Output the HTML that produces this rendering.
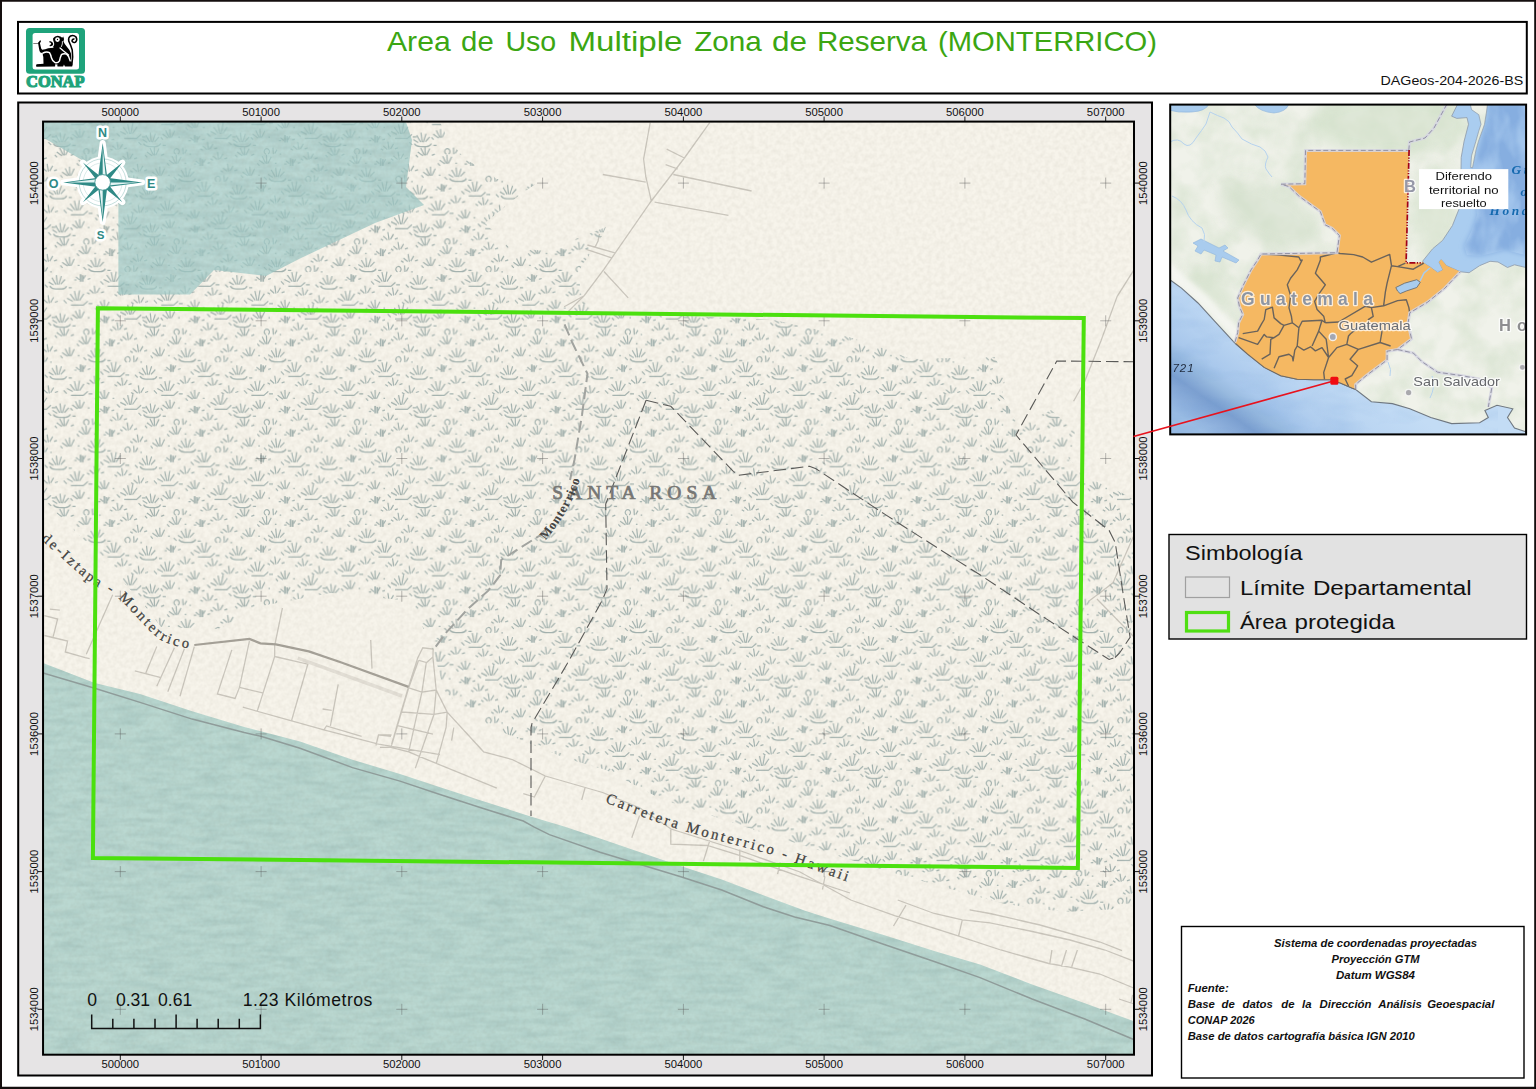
<!DOCTYPE html>
<html lang="es"><head><meta charset="utf-8"><title>Area de Uso Multiple Zona de Reserva (MONTERRICO)</title>
<style>
html,body{margin:0;padding:0;background:#fff;}
body{width:1536px;height:1089px;overflow:hidden;font-family:"Liberation Sans",sans-serif;}
svg{display:block;position:absolute;left:0;top:0;}
text{font-family:"Liberation Sans",sans-serif;}
.serif{font-family:"Liberation Serif",serif;}
</style></head><body>
<svg width="1536" height="1089" viewBox="0 0 1536 1089">
<defs>
<clipPath id="mapclip"><rect x="43.05" y="121.6" width="1090.95" height="933.1"/></clipPath>
<pattern id="swp" x="150" y="332.5" width="90.25" height="90.25" patternUnits="userSpaceOnUse"><g fill="none" stroke="#a4b3b0" stroke-linecap="butt" opacity="1.0"><path d="M2.2 3.7L-3.1 -0.1M3.5 3.3L-0.0 -3.9M4.5 3.5L4.2 -5.5M5.7 3.3L9.0 -3.5M-4.9 3.0l2.2 2.4M11.1 3.3l3 -1.2M2.2 94.0L-3.1 90.2M3.5 93.5L-0.0 86.3M4.5 93.8L4.2 84.8M5.7 93.5L9.0 86.8M-4.9 93.3l2.2 2.4M11.1 93.6l3 -1.2M92.4 3.7L87.2 -0.1M93.7 3.3L90.2 -3.9M94.8 3.5L94.5 -5.5M95.9 3.3L99.2 -3.5M85.3 3.0l2.2 2.4M101.3 3.3l3 -1.2M92.4 94.0L87.2 90.2M93.7 93.5L90.2 86.3M94.8 93.8L94.5 84.8M95.9 93.5L99.2 86.8M85.3 93.3l2.2 2.4M101.3 93.6l3 -1.2M25.7 2.2a2.6 2.8 0 1 1 2.2 -0.2M33.1 2.2L32.7 -4.3M34.5 1.5L36.7 -2.4M39.4 2.1h1.5M25.7 92.4a2.6 2.8 0 1 1 2.2 -0.2M33.1 92.4L32.7 85.9M34.5 91.8L36.7 87.9M39.4 92.3h1.5M24.2 12.0L18.9 8.2M25.5 11.5L22.0 4.3M26.6 11.8L26.2 2.8M27.7 11.5L31.0 4.8M17.1 11.3l2.2 2.4M34.6 11.2h1.6M24.2 102.3L18.9 98.4M25.5 101.8L22.0 94.6M26.6 102.0L26.2 93.0M27.7 101.8L31.0 95.0M17.1 101.5l2.2 2.4M34.6 101.4h1.6M49.1 11.8L45.7 9.0M52.9 11.2L55.2 7.3M43.9 12.0h2.4M57.4 11.3l2.6 -0.8M49.1 102.1L45.7 99.2M52.9 101.4L55.2 97.5M43.9 102.2h2.4M57.4 101.5l2.6 -0.8M67.0 7.5L62.9 3.8M68.7 7.7L67.5 -0.2M70.1 7.0L73.1 1.8M60.4 6.7l2.5 1.6M74.4 6.8l3 -1M67.0 97.8L62.9 94.1M68.7 97.9L67.5 90.0M70.1 97.3L73.1 92.1M60.4 96.9l2.5 1.6M74.4 97.0l3 -1M7.7 23.9L2.4 20.1M9.0 23.5L5.5 16.3M10.0 23.7L9.7 14.7M11.2 23.5L14.5 16.7M0.6 23.2l2.2 2.4M18.1 23.1h1.6M97.9 23.9L92.7 20.1M99.3 23.5L95.7 16.3M100.3 23.7L100.0 14.7M101.4 23.5L104.7 16.7M90.9 23.2l2.2 2.4M108.4 23.1h1.6M28.7 26.4Q30.7 29.4 34.7 29.4H40.7Q44.2 29.4 45.7 26.4M32.5 25.2L27.8 22.3M35.0 24.9L31.0 17.9M36.4 24.9L35.4 15.5M37.7 25.0L40.4 16.5M39.7 24.5L44.1 19.7M23.7 24.9l2.8 2.8M47.7 28.2h3.2M-13.1 19.4L-17.2 15.8M-11.5 19.6L-12.6 11.7M-10.0 19.0L-7.0 13.8M-19.8 18.6l2.5 1.6M-5.8 18.7l3 -1M77.1 19.4L73.0 15.8M78.8 19.6L77.6 11.7M80.2 19.0L83.2 13.8M70.5 18.6l2.5 1.6M84.5 18.7l3 -1M67.0 29.7a2.6 2.8 0 1 1 2.2 -0.2M74.4 29.7L74.0 23.2M75.8 29.1L78.0 25.2M80.7 29.6h1.5M19.7 37.6L16.3 34.7M23.5 36.9L25.8 33.0M14.5 37.7h2.4M28.0 37.0l2.6 -0.8M48.0 44.1H60.4l4.5 -4M49.8 40.2L44.0 37.2M51.8 39.3L47.1 32.9M53.6 39.6L51.5 29.9M54.7 39.6L56.5 29.3M56.4 39.3L60.9 32.6M40.7 39.1l3 3.2M65.7 42.6h3.8M-10.1 43.8Q-8.1 46.8 -4.1 46.8H1.9Q5.4 46.8 6.9 43.8M-6.3 42.7L-11.0 39.8M-3.8 42.3L-7.8 35.4M-2.4 42.3L-3.4 32.9M-1.2 42.5L1.6 33.9M0.9 42.0L5.3 37.2M-15.1 42.3l2.8 2.8M8.9 45.6h3.2M80.2 43.8Q82.2 46.8 86.2 46.8H92.2Q95.7 46.8 97.2 43.8M83.9 42.7L79.2 39.8M86.4 42.3L82.4 35.4M87.8 42.3L86.8 32.9M89.1 42.5L91.9 33.9M91.2 42.0L95.5 37.2M75.2 42.3l2.8 2.8M99.2 45.6h3.2M34.0 51.1L29.9 47.4M35.6 51.3L34.5 43.4M37.1 50.6L40.1 45.4M27.3 50.3l2.5 1.6M41.3 50.4l3 -1M61.5 53.0L57.4 49.3M63.2 53.2L62.0 45.2M64.6 52.5L67.6 47.3M54.9 52.1l2.5 1.6M68.9 52.2l3 -1M11.2 62.9H23.6l4.5 -4M13.0 59.1L7.3 56.0M15.1 58.2L10.4 51.7M16.8 58.5L14.7 48.7M18.0 58.4L19.8 48.1M19.7 58.1L24.2 51.5M3.9 57.9l3 3.2M28.9 61.4h3.8M-12.2 60.8L-16.3 57.1M-10.6 61.0L-11.7 53.0M-9.1 60.3L-6.1 55.1M-18.9 59.9l2.5 1.6M-4.9 60.0l3 -1M78.0 60.8L73.9 57.1M79.7 61.0L78.6 53.0M81.1 60.3L84.1 55.1M71.4 59.9l2.5 1.6M85.4 60.0l3 -1M42.6 66.6L37.3 62.8M43.9 66.2L40.4 59.0M44.9 66.4L44.6 57.4M46.1 66.2L49.4 59.4M35.5 65.9l2.2 2.4M53.0 65.8h1.6M64.5 76.7H76.9l4.5 -4M66.3 72.8L60.6 69.8M68.4 71.9L63.7 65.5M70.1 72.2L68.0 62.5M71.2 72.2L73.1 61.9M72.9 71.9L77.4 65.2M57.2 71.7l3 3.2M82.2 75.2h3.8M17.8 76.3L12.5 72.5M19.1 75.8L15.6 68.6M20.1 76.1L19.8 67.1M21.3 75.8L24.6 69.1M10.7 75.6l2.2 2.4M28.2 75.5h1.6M43.6 78.9L40.2 76.0M47.4 78.2L49.7 74.3M38.4 79.0h2.4M51.9 78.3l2.6 -0.8M-6.4 81.9Q-4.4 84.9 -0.4 84.9H5.6Q9.1 84.9 10.6 81.9M-2.7 80.8L-7.3 77.9M-0.2 80.4L-4.2 73.5M1.3 80.5L0.3 71.0M2.5 80.6L5.3 72.0M4.6 80.1L8.9 75.3M-11.4 80.4l2.8 2.8M12.6 83.7h3.2M83.8 81.9Q85.8 84.9 89.8 84.9H95.8Q99.3 84.9 100.8 81.9M87.6 80.8L82.9 77.9M90.1 80.4L86.1 73.5M91.5 80.5L90.5 71.0M92.8 80.6L95.5 72.0M94.8 80.1L99.2 75.3M78.8 80.4l2.8 2.8M102.8 83.7h3.2M56.9 -2.4L52.8 -6.1M58.6 -2.2L57.4 -10.1M60.0 -2.9L63.0 -8.1M50.3 -3.2l2.5 1.6M64.3 -3.1l3 -1M56.9 87.9L52.8 84.2M58.6 88.0L57.4 80.1M60.0 87.4L63.0 82.2M50.3 87.0l2.5 1.6M64.3 87.1l3 -1" stroke-width="1.2"/><path d="M50.2 13.8V6.3M52.4 13.8V7.3M50.2 104.0V96.5M52.4 104.0V97.5M20.8 39.5V32.0M23.0 39.5V33.0M44.7 80.8V73.3M46.9 80.8V74.3" stroke-width="1.7"/></g></pattern>
<filter id="paper" x="0" y="0" width="100%" height="100%" color-interpolation-filters="sRGB"><feTurbulence type="fractalNoise" baseFrequency="0.22" numOctaves="2" seed="5"/><feColorMatrix type="matrix" values="0 0 0 0 0.5  0 0 0 0 0.47  0 0 0 0 0.4  0 0 0 0.16 -0.05"/></filter>
<filter id="waves" x="0" y="0" width="100%" height="100%" color-interpolation-filters="sRGB"><feTurbulence type="fractalNoise" baseFrequency="0.035 0.16" numOctaves="2" seed="9"/><feColorMatrix type="matrix" values="0 0 0 0 0.35  0 0 0 0 0.5  0 0 0 0 0.5  0 0 0 0.3 -0.1"/></filter>
<clipPath id="seaclip"><polygon points="43.0,663.0 94.7,683.0 140.0,694.1 192.1,711.3 244.2,726.9 300.0,741.5 352.5,759.8 400.0,773.9 440.0,787.2 481.7,800.7 530.6,816.4 565.0,826.8 600.0,838.5 671.6,863.0 721.7,879.6 763.3,895.2 805.0,910.8 830.0,918.8 882.1,934.4 934.2,951.0 980.0,964.6 1032.1,984.4 1084.2,1003.1 1136.0,1022.0 1136.0,1057.0 43.0,1057.0"/><polygon points="43.0,122.0 406.0,122.0 412.0,140.0 406.0,187.0 424.0,205.0 375.0,223.0 299.0,259.0 266.0,276.0 214.0,270.0 190.0,294.6 118.4,294.6 118.4,186.0 82.0,160.0 43.0,137.5"/></clipPath>
</defs>
<rect x="18.2" y="102.5" width="1133.8" height="973" fill="#e6e4e5" stroke="#000" stroke-width="2"/>
<g clip-path="url(#mapclip)">
<rect x="43.05" y="121.6" width="1090.95" height="933.1" fill="#f7f4eb"/>
<path d="M49.9 609.1 L59.8 610.2M44.4 615.7 L57.6 619.0 L53.2 636.7M44.4 635.5 L67.6 641.0 L65.3 652.0 L85.2 657.6 L89.6 658.7M112.7 594.8 L86.3 654.3M156.8 646.6 L145.8 673.0M134.8 670.8 L160.1 677.4M174.4 647.7 L156.8 686.2M184.4 648.8 L167.8 691.8M194.3 646.6 L180.0 696.2M231.8 649.9 L217.4 694.0 L235.1 698.4 L239.5 687.4 L249.4 641.1M239.5 687.4 L262.6 692.9M282.4 608.0 L274.7 645.5 L274.7 656.5 L257.1 711.6M242.8 707.2 L323.9 729.8 L378.5 744.2 L440.0 754.6M274.7 656.5 L307.8 664.2 L291.3 721.5M338.2 684.3 L330.4 725.9M322.6 709.0 L331.7 710.3M323.9 729.8 L326.5 725.9 L361.6 736.4M370.7 640.0 L372.0 668.6M408.5 686.9 L391.6 744.2M408.5 686.9 L417.6 658.2 L422.8 647.8 L433.2 649.1 L432.9 657.0 L426.6 662.5 L418.9 660.3M432.9 657.0 L436.2 690.0 L447.2 712.1 L483.6 751.8 L512.2 759.5 L545.3 776.0 L602.6 792.5M418.6 660.3 L408.7 687.8 L391.0 747.4M426.3 662.5 L421.9 692.2 L408.7 751.8M436.2 690.0 L434.0 714.3 L415.3 768.3M447.2 712.1 L446.1 727.5 L436.2 763.9M408.7 687.8 L421.9 692.2 L436.2 690.0M402.0 712.0 L434.0 714.3 L447.2 712.1M396.5 725.3 L432.9 734.1M380.0 735.2 L391.0 736.3M375.9 745.5 L378.5 735.0 L391.6 735.0M380.0 747.4 L391.0 747.4 L408.7 751.8 L424.1 758.4 L496.8 788.1M453.8 727.5 L451.6 740.7M545.3 776.0 L534.3 797.0 L523.3 793.7M585.0 788.0 L581.7 800.0M602.6 792.5 L640.0 808.0 L671.0 829.0 L741.0 851.0 L800.0 872.0 L850.8 900.0 L894.6 915.6 L955.0 934.9 L1000.8 950.0 L1048.8 963.5 L1069.6 967.2 L1099.8 974.0 L1136.0 989.0M670.8 829.8 L670.8 844.2 L707.3 845.5 L741.0 855.9 L800.0 876.7 L850.0 893.0M897.7 900.0 L934.2 913.5 L962.3 919.8 L990.0 922.9 L1030.0 931.0 L1070.0 940.0 L1105.0 950.0 L1136.0 962.0M969.6 909.9 L990.0 913.5 L1040.0 925.0 L1100.0 942.0 L1122.0 950.7M639.6 815.5 L631.8 837.7M709.9 840.3 L703.4 861.1M739.8 849.4 L739.8 861.1M780.2 862.4 L777.6 874.1M825.0 876.5 L822.5 889.5M906.0 905.2 L893.5 926.0M962.3 919.8 L958.6 935.9M1051.9 950.0 L1049.8 963.5M1066.5 950.0 L1061.3 966.7M1077.4 950.0 L1071.7 966.7M1119.0 999.0 L1131.0 1003.0 L1136.0 1004.5M1132.6 994.8 L1131.0 1003.0M650.2 122.7 L643.6 159.1 L645.8 176.7 L651.3 201.0M709.7 122.7 L684.4 158.0 L651.3 201.0 L603.9 269.3 L584.1 295.7 L566.4 313.4M666.7 149.2 L684.4 158.0M665.6 164.6 L677.8 169.0M673.3 174.5 L751.6 191.0M654.6 202.1 L728.4 215.3M602.8 174.5 L645.8 182.2M587.4 245.0 L614.9 252.8M586.3 249.4 L611.6 257.8M603.9 271.5 L628.2 297.9M584.1 295.7 L564.2 306.8M599.5 234.0 L598.0 241.0 L595.1 247.2M1136.0 266.0 L1132.5 272.1 L1117.2 296.3 L1101.0 340.7 L1084.9 381.0 L1073.6 401.2M1136.0 532.0 L1132.5 538.5 L1113.0 582.8 L1097.0 595.0 L1089.0 601.0M1097.0 599.0 L1136.0 639.0" fill="none" stroke="#cbc7be" stroke-width="1.3"/>
<polyline points="297.8,658.2 402.0,696.0" fill="none" stroke="#e3dfd6" stroke-width="3.5"/>
<polyline points="194.3,645.0 249.4,638.9 260.4,643.3 275.8,644.4 308.8,651.4 340.0,662.0 408.5,686.9" fill="none" stroke="#a5a198" stroke-width="2.2"/>
<polygon points="43.0,663.0 94.7,683.0 140.0,694.1 192.1,711.3 244.2,726.9 300.0,741.5 352.5,759.8 400.0,773.9 440.0,787.2 481.7,800.7 530.6,816.4 565.0,826.8 600.0,838.5 671.6,863.0 721.7,879.6 763.3,895.2 805.0,910.8 830.0,918.8 882.1,934.4 934.2,951.0 980.0,964.6 1032.1,984.4 1084.2,1003.1 1136.0,1022.0 1136.0,1057.0 43.0,1057.0" fill="#bad8d1"/>
<polygon points="43.0,122.0 440.0,122.0 446.0,135.0 464.0,158.0 497.0,179.0 537.0,183.0 517.0,197.0 485.0,223.0 509.0,247.0 545.0,251.0 606.0,227.0 602.0,236.0 578.0,272.0 582.0,300.0 600.0,312.0 774.0,320.0 846.0,336.0 888.0,350.0 911.0,359.0 995.0,357.0 1005.0,379.0 1002.0,395.0 1010.0,410.0 1020.0,426.0 1051.0,410.0 1075.0,431.0 1070.0,460.0 1088.0,478.0 1122.0,493.0 1135.0,500.0 1135.0,908.0 1065.0,912.0 1005.0,904.0 904.0,876.0 782.0,839.0 661.0,799.0 606.0,770.0 565.0,758.0 497.0,730.0 481.0,722.0 464.0,710.0 444.0,690.0 434.0,653.0 420.0,621.0 412.0,601.0 331.0,593.0 266.0,605.0 218.0,629.0 161.0,627.0 141.0,601.0 121.0,580.0 80.0,536.0 43.0,500.0" fill="url(#swp)"/>
<polygon points="43.0,122.0 406.0,122.0 412.0,140.0 406.0,187.0 424.0,205.0 375.0,223.0 299.0,259.0 266.0,276.0 214.0,270.0 190.0,294.6 118.4,294.6 118.4,186.0 82.0,160.0 43.0,137.5" fill="#a2cdcb" fill-opacity="0.72"/>
<rect x="43.05" y="121.6" width="1090.95" height="933.1" filter="url(#paper)"/>
<g clip-path="url(#seaclip)"><rect x="43.05" y="121.6" width="1090.95" height="933.1" filter="url(#waves)"/></g>
<polyline points="43.0,673.0 94.7,688.2 140.0,702.4 192.1,719.1 244.2,732.6 260.8,736.3 300.0,748.2 352.5,767.6 400.0,781.1 440.0,794.5 481.7,808.0 523.3,821.0 533.8,826.8 549.4,834.6 600.0,852.3 680.0,876.5 721.7,890.0 763.3,906.7 794.6,917.0 830.0,925.5 882.1,943.8 934.2,961.5 980.0,977.6 1032.1,999.0 1084.2,1018.8 1136.0,1040.4" fill="none" stroke="#8f9c9a" stroke-width="1.5"/>
<polyline points="564.6,324.3 572.0,342.0 587.5,373.8 582.0,415.0 574.5,459.7 570.0,480.0" fill="none" stroke="#a1a39f" stroke-width="2" stroke-dasharray="12 5"/>
<polyline points="545.0,530.0 540.6,535.0 512.0,553.0 501.2,560.0 500.1,575.4 488.0,590.9 468.2,608.5 446.1,632.7 432.9,650.4" fill="none" stroke="#a1a39f" stroke-width="2" stroke-dasharray="12 5"/>
<polyline points="646.1,400.3 605.7,504.0 607.0,588.7 602.6,599.7 567.3,663.6 532.1,723.1 531.0,727.5 531.0,816.0" fill="none" stroke="#5a5a58" stroke-width="1.1" stroke-dasharray="12.5 5"/>
<polyline points="646.1,400.3 670.8,406.3 733.3,471.4 738.5,475.3 809.5,466.2 816.0,468.8 885.0,514.4 950.1,556.0 980.0,574.8 1040.5,615.1 1109.1,659.5 1115.0,657.5" fill="none" stroke="#5a5a58" stroke-width="1.1" stroke-dasharray="12.5 5"/>
<polyline points="1136.0,361.8 1056.8,361.0 1016.0,435.0 1072.8,502.1 1109.1,530.4 1115.2,542.5 1123.3,595.0 1130.1,637.3 1119.2,653.5 1115.0,657.5" fill="none" stroke="#5a5a58" stroke-width="1.1" stroke-dasharray="12.5 5"/>
<text x="552.3" y="498.8" class="serif" font-size="19.5" fill="#767674" stroke="#767674" stroke-width="0.7" textLength="164" lengthAdjust="spacing">SANTA ROSA</text>
<path id="lp3" d="M540.0 547.0C540.9 545.9 543.2 543.2 545.5 540.5C547.8 537.8 550.8 534.2 553.5 530.5C556.2 526.8 559.2 522.4 562.0 518.0C564.8 513.6 567.6 508.7 570.0 504.0C572.4 499.3 574.7 494.7 576.5 490.0C578.3 485.3 579.8 480.3 581.0 476.0C582.2 471.7 583.5 466.0 584.0 464.0" fill="none"/>
<text class="serif" font-size="13" font-weight="bold" fill="#454543" letter-spacing="0.75"><textPath href="#lp3" startOffset="8.5">Monterrico</textPath></text>
<path id="lp1" d="M41.0 539.5C44.1 542.3 53.2 550.3 59.8 556.2C66.4 562.1 74.9 570.0 80.8 574.9C86.7 579.8 90.2 582.5 95.1 585.5C100.0 588.5 105.6 590.4 110.0 593.0C114.4 595.6 117.8 598.2 121.6 601.4C125.4 604.6 128.6 608.2 132.6 612.4C136.6 616.6 141.6 622.5 145.8 626.7C150.0 630.9 153.7 634.8 157.9 637.8C162.1 640.8 166.1 642.7 171.1 644.4C176.1 646.1 182.9 647.2 187.7 648.1C192.5 649.0 197.9 649.3 200.0 649.5" fill="none"/>
<text class="serif" font-size="14.5" fill="#424240" stroke="#424240" stroke-width="0.25" letter-spacing="2.6"><textPath href="#lp1" startOffset="0">de-Iztapa - Monterrico</textPath></text>
<path id="lp2" d="M600.5 800.6C601.4 800.9 598.0 799.5 605.7 802.5C613.5 805.5 633.1 813.5 647.0 818.5C660.9 823.5 675.2 828.2 689.0 832.4C702.8 836.6 716.2 839.8 730.0 843.5C743.8 847.2 760.6 851.3 771.7 854.6C782.8 857.9 786.5 859.8 796.7 863.4C806.9 867.0 822.8 872.8 833.0 876.5C843.2 880.2 850.2 882.7 858.0 885.5C865.8 888.3 876.3 892.2 880.0 893.5" fill="none"/>
<text class="serif" font-size="15" fill="#424240" stroke="#424240" stroke-width="0.25" letter-spacing="2.55"><textPath href="#lp2" startOffset="5">Carretera Monterrico - Hawaii</textPath></text>
<path d="M114.8 183.1h11M120.3 177.6v11M114.8 320.8h11M120.3 315.3v11M114.8 458.5h11M120.3 453.0v11M114.8 596.2h11M120.3 590.7v11M114.8 733.9h11M120.3 728.4v11M114.8 871.6h11M120.3 866.1v11M114.8 1009.3h11M120.3 1003.8v11M255.6 183.1h11M261.1 177.6v11M255.6 320.8h11M261.1 315.3v11M255.6 458.5h11M261.1 453.0v11M255.6 596.2h11M261.1 590.7v11M255.6 733.9h11M261.1 728.4v11M255.6 871.6h11M261.1 866.1v11M255.6 1009.3h11M261.1 1003.8v11M396.3 183.1h11M401.8 177.6v11M396.3 320.8h11M401.8 315.3v11M396.3 458.5h11M401.8 453.0v11M396.3 596.2h11M401.8 590.7v11M396.3 733.9h11M401.8 728.4v11M396.3 871.6h11M401.8 866.1v11M396.3 1009.3h11M401.8 1003.8v11M537.1 183.1h11M542.6 177.6v11M537.1 320.8h11M542.6 315.3v11M537.1 458.5h11M542.6 453.0v11M537.1 596.2h11M542.6 590.7v11M537.1 733.9h11M542.6 728.4v11M537.1 871.6h11M542.6 866.1v11M537.1 1009.3h11M542.6 1003.8v11M677.9 183.1h11M683.4 177.6v11M677.9 320.8h11M683.4 315.3v11M677.9 458.5h11M683.4 453.0v11M677.9 596.2h11M683.4 590.7v11M677.9 733.9h11M683.4 728.4v11M677.9 871.6h11M683.4 866.1v11M677.9 1009.3h11M683.4 1003.8v11M818.6 183.1h11M824.1 177.6v11M818.6 320.8h11M824.1 315.3v11M818.6 458.5h11M824.1 453.0v11M818.6 596.2h11M824.1 590.7v11M818.6 733.9h11M824.1 728.4v11M818.6 871.6h11M824.1 866.1v11M818.6 1009.3h11M824.1 1003.8v11M959.4 183.1h11M964.9 177.6v11M959.4 320.8h11M964.9 315.3v11M959.4 458.5h11M964.9 453.0v11M959.4 596.2h11M964.9 590.7v11M959.4 733.9h11M964.9 728.4v11M959.4 871.6h11M964.9 866.1v11M959.4 1009.3h11M964.9 1003.8v11M1100.2 183.1h11M1105.7 177.6v11M1100.2 320.8h11M1105.7 315.3v11M1100.2 458.5h11M1105.7 453.0v11M1100.2 596.2h11M1105.7 590.7v11M1100.2 733.9h11M1105.7 728.4v11M1100.2 871.6h11M1105.7 866.1v11M1100.2 1009.3h11M1105.7 1003.8v11" stroke="#5a5a58" stroke-width="0.7" fill="none" opacity="0.6"/>
<polygon points="97.9,308.2 1083.8,318.1 1077.9,867.9 92.9,857.9" fill="none" stroke="#4be00e" stroke-width="4" stroke-linejoin="miter"/>
<g stroke="#fff" stroke-width="6" stroke-linejoin="round" fill="#fff">
<circle cx="102.65" cy="182.4" r="23"/>
<polygon points="122.4,162.6 106.9,182.4 122.4,202.2 102.7,186.6 82.9,202.2 98.5,182.4 82.9,162.6 102.7,178.2"/><polygon points="102.7,142.9 107.3,177.7 142.2,182.4 107.3,187.1 102.7,221.9 98.0,187.1 63.2,182.4 98.0,177.7"/>
</g>
<circle cx="102.65" cy="182.4" r="23.5" fill="none" stroke="#9cc7c4" stroke-width="0.6"/>
<circle cx="102.65" cy="182.4" r="19.5" fill="none" stroke="#b7d6d3" stroke-width="0.5"/>
<polygon points="122.4,162.6 106.9,182.4 122.4,202.2 102.7,186.6 82.9,202.2 98.5,182.4 82.9,162.6 102.7,178.2" fill="#2f8a86"/>
<polygon points="102.7,182.4 122.4,162.6 106.9,182.4" fill="#d8eeee" opacity="0.0"/>
<polygon points="102.7,182.4 122.4,202.2 102.7,186.6" fill="#d8eeee" opacity="0.0"/>
<polygon points="102.7,182.4 82.9,202.2 98.5,182.4" fill="#d8eeee" opacity="0.0"/>
<polygon points="102.7,182.4 82.9,162.6 102.7,178.2" fill="#d8eeee" opacity="0.0"/>
<polygon points="102.7,142.9 107.3,177.7 142.2,182.4 107.3,187.1 102.7,221.9 98.0,187.1 63.2,182.4 98.0,177.7" fill="#2f8a86"/>
<polygon points="102.7,179.4 102.7,147.4 106.0,179.0" fill="#e4f4f3"/>
<polygon points="105.7,182.4 137.7,182.4 106.0,185.8" fill="#e4f4f3"/>
<polygon points="102.7,185.4 102.7,217.4 99.3,185.8" fill="#e4f4f3"/>
<polygon points="99.7,182.4 67.7,182.4 99.3,179.0" fill="#e4f4f3"/>
<circle cx="102.65" cy="182.4" r="7.8" fill="#fff" stroke="#2f8a86" stroke-width="0.8"/>
<text x="102.6" y="137.4" font-size="12.5" font-weight="bold" fill="#2f8a86" text-anchor="middle" stroke="#fff" stroke-width="5" paint-order="stroke" stroke-linejoin="round">N</text>
<text x="151.2" y="188" font-size="12.5" font-weight="bold" fill="#2f8a86" text-anchor="middle" stroke="#fff" stroke-width="5" paint-order="stroke" stroke-linejoin="round">E</text>
<text x="53.7" y="188" font-size="12.5" font-weight="bold" fill="#2f8a86" text-anchor="middle" stroke="#fff" stroke-width="5" paint-order="stroke" stroke-linejoin="round">O</text>
<text x="100.6" y="239" font-size="11.5" font-weight="bold" fill="#2f8a86" text-anchor="middle" stroke="#fff" stroke-width="5" paint-order="stroke" stroke-linejoin="round">S</text>
<path d="M91.7 1014.6V1028.4H260.4V1014.6M112.8 1018.8V1028.4M133.9 1018.8V1028.4M155.0 1018.8V1028.4M176.1 1014.6V1028.4M197.1 1018.8V1028.4M218.2 1018.8V1028.4M239.3 1018.8V1028.4" fill="none" stroke="#111" stroke-width="1.5"/>
<text x="87.2" y="1005.5" font-size="17.6" fill="#111">0</text>
<text x="115.9" y="1005.5" font-size="17.6" fill="#111">0.31</text>
<text x="158" y="1005.5" font-size="17.6" fill="#111">0.61</text>
<text x="242.7" y="1005.5" font-size="17.6" fill="#111" textLength="129.7" lengthAdjust="spacing">1.23 Kilómetros</text>
</g>
<rect x="43.05" y="121.6" width="1090.95" height="933.1" fill="none" stroke="#000" stroke-width="2"/>
<path d="M120.3 116.5V122M120.3 1054.5V1060M261.1 116.5V122M261.1 1054.5V1060M401.8 116.5V122M401.8 1054.5V1060M542.6 116.5V122M542.6 1054.5V1060M683.4 116.5V122M683.4 1054.5V1060M824.1 116.5V122M824.1 1054.5V1060M964.9 116.5V122M964.9 1054.5V1060M1105.7 116.5V122M1105.7 1054.5V1060M37.5 183.1H43M1134 183.1H1139.5M37.5 320.8H43M1134 320.8H1139.5M37.5 458.5H43M1134 458.5H1139.5M37.5 596.2H43M1134 596.2H1139.5M37.5 733.9H43M1134 733.9H1139.5M37.5 871.6H43M1134 871.6H1139.5M37.5 1009.3H43M1134 1009.3H1139.5" stroke="#000" stroke-width="0.9" fill="none"/>
<text x="120.3" y="116.4" font-size="11.3" fill="#111" text-anchor="middle">500000</text>
<text x="120.3" y="1068.2" font-size="11.3" fill="#111" text-anchor="middle">500000</text>
<text x="261.1" y="116.4" font-size="11.3" fill="#111" text-anchor="middle">501000</text>
<text x="261.1" y="1068.2" font-size="11.3" fill="#111" text-anchor="middle">501000</text>
<text x="401.8" y="116.4" font-size="11.3" fill="#111" text-anchor="middle">502000</text>
<text x="401.8" y="1068.2" font-size="11.3" fill="#111" text-anchor="middle">502000</text>
<text x="542.6" y="116.4" font-size="11.3" fill="#111" text-anchor="middle">503000</text>
<text x="542.6" y="1068.2" font-size="11.3" fill="#111" text-anchor="middle">503000</text>
<text x="683.4" y="116.4" font-size="11.3" fill="#111" text-anchor="middle">504000</text>
<text x="683.4" y="1068.2" font-size="11.3" fill="#111" text-anchor="middle">504000</text>
<text x="824.1" y="116.4" font-size="11.3" fill="#111" text-anchor="middle">505000</text>
<text x="824.1" y="1068.2" font-size="11.3" fill="#111" text-anchor="middle">505000</text>
<text x="964.9" y="116.4" font-size="11.3" fill="#111" text-anchor="middle">506000</text>
<text x="964.9" y="1068.2" font-size="11.3" fill="#111" text-anchor="middle">506000</text>
<text x="1105.7" y="116.4" font-size="11.3" fill="#111" text-anchor="middle">507000</text>
<text x="1105.7" y="1068.2" font-size="11.3" fill="#111" text-anchor="middle">507000</text>
<text transform="translate(37.6 183.1) rotate(-90)" font-size="11.3" fill="#111" text-anchor="middle">1540000</text>
<text transform="translate(1147.2 183.1) rotate(-90)" font-size="11.3" fill="#111" text-anchor="middle">1540000</text>
<text transform="translate(37.6 320.8) rotate(-90)" font-size="11.3" fill="#111" text-anchor="middle">1539000</text>
<text transform="translate(1147.2 320.8) rotate(-90)" font-size="11.3" fill="#111" text-anchor="middle">1539000</text>
<text transform="translate(37.6 458.5) rotate(-90)" font-size="11.3" fill="#111" text-anchor="middle">1538000</text>
<text transform="translate(1147.2 458.5) rotate(-90)" font-size="11.3" fill="#111" text-anchor="middle">1538000</text>
<text transform="translate(37.6 596.2) rotate(-90)" font-size="11.3" fill="#111" text-anchor="middle">1537000</text>
<text transform="translate(1147.2 596.2) rotate(-90)" font-size="11.3" fill="#111" text-anchor="middle">1537000</text>
<text transform="translate(37.6 733.9) rotate(-90)" font-size="11.3" fill="#111" text-anchor="middle">1536000</text>
<text transform="translate(1147.2 733.9) rotate(-90)" font-size="11.3" fill="#111" text-anchor="middle">1536000</text>
<text transform="translate(37.6 871.6) rotate(-90)" font-size="11.3" fill="#111" text-anchor="middle">1535000</text>
<text transform="translate(1147.2 871.6) rotate(-90)" font-size="11.3" fill="#111" text-anchor="middle">1535000</text>
<text transform="translate(37.6 1009.3) rotate(-90)" font-size="11.3" fill="#111" text-anchor="middle">1534000</text>
<text transform="translate(1147.2 1009.3) rotate(-90)" font-size="11.3" fill="#111" text-anchor="middle">1534000</text>
<defs>
<clipPath id="insclip"><rect x="1170.2" y="104.6" width="355.89999999999986" height="329.79999999999995"/></clipPath>
<clipPath id="landclip"><polygon points="1168.0,278.5 1171.3,280.7 1181.5,288.1 1198.0,303.0 1214.6,321.2 1234.4,342.6 1247.6,354.2 1264.2,367.4 1280.7,375.7 1297.2,379.3 1313.8,379.8 1330.3,379.8 1340.2,383.1 1351.8,388.1 1355.7,389.6 1371.4,401.8 1392.4,403.6 1409.8,408.8 1430.8,417.5 1451.7,423.6 1479.6,422.8 1488.3,417.5 1484.9,410.6 1497.0,405.3 1512.8,408.8 1507.5,417.5 1514.5,428.0 1525.0,431.5 1529.0,432.0 1529.0,268.0 1525.9,267.5 1514.5,264.8 1507.5,267.5 1498.0,262.0 1490.0,261.3 1479.6,265.7 1469.1,272.7 1460.4,271.8 1446.5,265.7 1441.2,259.6 1439.0,262.0 1443.0,270.0 1437.7,272.7 1430.8,267.5 1423.8,263.1 1422.6,261.2 1432.6,248.8 1442.5,240.5 1452.4,225.6 1459.0,209.0 1462.0,190.0 1461.0,170.0 1461.2,157.4 1464.1,141.2 1468.5,124.3 1467.0,117.6 1456.8,118.4 1451.6,116.2 1458.2,103.0 1168.0,103.0"/><polygon points="1470.0,103.0 1471.5,109.6 1478.8,114.7 1481.0,124.3 1478.8,130.9 1475.9,141.2 1471.5,155.9 1470.7,167.6 1472.5,167.6 1476.0,150.0 1478.5,141.2 1482.5,130.0 1484.5,124.3 1486.5,112.0 1487.6,103.0"/></clipPath>
<filter id="landtex" x="0" y="0" width="100%" height="100%" color-interpolation-filters="sRGB"><feTurbulence type="fractalNoise" baseFrequency="0.035" numOctaves="3" seed="7"/><feColorMatrix type="matrix" values="0 0 0 0 0.83  0 0 0 0 0.88  0 0 0 0 0.80  2.2 0 0 0 -0.75"/></filter>
<filter id="seatex" x="0" y="0" width="100%" height="100%" color-interpolation-filters="sRGB"><feTurbulence type="fractalNoise" baseFrequency="0.02 0.05" numOctaves="3" seed="3"/><feColorMatrix type="matrix" values="0 0 0 0 0.36  0 0 0 0 0.56  0 0 0 0 0.82  2.4 0 0 0 -0.95"/></filter>
<filter id="seatex2" x="0" y="0" width="100%" height="100%" color-interpolation-filters="sRGB"><feTurbulence type="fractalNoise" baseFrequency="0.05 0.025" numOctaves="3" seed="11"/><feColorMatrix type="matrix" values="0 0 0 0 0.72  0 0 0 0 0.84  0 0 0 0 0.96  2.6 0 0 0 -1.0"/></filter>
<filter id="blur6" x="-20%" y="-20%" width="140%" height="140%"><feGaussianBlur stdDeviation="6"/></filter>
<filter id="blur3" x="-20%" y="-20%" width="140%" height="140%"><feGaussianBlur stdDeviation="2.5"/></filter>
<linearGradient id="pacg" gradientUnits="userSpaceOnUse" x1="1290" y1="330" x2="1215" y2="440"><stop offset="0" stop-color="#c3dcf5"/><stop offset="0.3" stop-color="#bad5f2"/><stop offset="0.55" stop-color="#a9c8ec"/><stop offset="0.66" stop-color="#98badf"/><stop offset="0.78" stop-color="#7b9fd0"/><stop offset="0.9" stop-color="#8eb0dc"/><stop offset="1" stop-color="#9cbee5"/></linearGradient>
</defs>
<g clip-path="url(#insclip)">
<rect x="1170.2" y="104.6" width="355.89999999999986" height="329.79999999999995" fill="url(#pacg)"/>
<rect x="1415" y="100" width="115" height="180" fill="#aacdf0"/>
<g filter="url(#blur3)"><polygon points="1488.5,103.0 1485.5,124.0 1480.5,141.0 1475.0,160.0 1473.0,168.0 1477.0,215.0 1471.0,232.0 1464.0,246.0 1467.0,255.0 1480.0,256.0 1505.0,250.0 1529.0,256.0 1529.0,103.0" fill="#86aee0"/></g>
<clipPath id="deepclip"><polygon points="1488.5,103.0 1485.5,124.0 1480.5,141.0 1475.0,160.0 1473.0,168.0 1477.0,215.0 1471.0,232.0 1464.0,246.0 1467.0,255.0 1480.0,256.0 1505.0,250.0 1529.0,256.0 1529.0,103.0"/></clipPath>
<g clip-path="url(#deepclip)"><rect x="1460" y="100" width="70" height="170" filter="url(#seatex2)" opacity="0.6"/></g>
<rect x="1168" y="270" width="330" height="170" filter="url(#seatex)" opacity="0.12"/>
<g clip-path="url(#landclip)">
<rect x="1168.2" y="102.6" width="359.89999999999986" height="333.79999999999995" fill="#f0f2ea"/>
<rect x="1168.2" y="102.6" width="359.89999999999986" height="333.79999999999995" filter="url(#landtex)" opacity="0.65"/>
<g filter="url(#blur6)" opacity="0.55"><ellipse cx="1390" cy="125" rx="80" ry="30" fill="#cfdfc6"/><ellipse cx="1270" cy="215" rx="55" ry="28" fill="#d2dfca" transform="rotate(25 1270 215)"/><ellipse cx="1435" cy="215" rx="22" ry="50" fill="#d5e2cc"/><ellipse cx="1210" cy="290" rx="30" ry="14" fill="#cfdec6" transform="rotate(40 1210 290)"/></g>
<g filter="url(#blur3)" opacity="0.8"><polyline points="1166,268 1187,285 1205,301 1222,319 1240,338 1246,346" fill="none" stroke="#f8f8f4" stroke-width="11"/></g>
</g>
<polyline points="1168.0,278.5 1171.3,280.7 1181.5,288.1 1198.0,303.0 1214.6,321.2 1234.4,342.6 1247.6,354.2 1264.2,367.4 1280.7,375.7 1297.2,379.3 1313.8,379.8 1330.3,379.8 1340.2,383.1 1351.8,388.1 1355.7,389.6 1371.4,401.8 1392.4,403.6 1409.8,408.8 1430.8,417.5 1451.7,423.6 1479.6,422.8 1488.3,417.5 1484.9,410.6 1497.0,405.3 1512.8,408.8 1507.5,417.5 1514.5,428.0 1525.0,431.5 1529.0,432.0" fill="none" stroke="#6f7780" stroke-width="1.1"/>
<polyline points="1529.0,268.0 1525.9,267.5 1514.5,264.8 1507.5,267.5 1498.0,262.0 1490.0,261.3 1479.6,265.7 1469.1,272.7 1460.4,271.8 1446.5,265.7 1441.2,259.6 1439.0,262.0 1443.0,270.0 1437.7,272.7 1430.8,267.5 1423.8,263.1 1422.6,261.2 1432.6,248.8 1442.5,240.5 1452.4,225.6 1459.0,209.0 1462.0,190.0 1461.0,170.0 1461.2,157.4 1464.1,141.2 1468.5,124.3 1467.0,117.6 1456.8,118.4 1451.6,116.2 1458.2,103.0" fill="none" stroke="#8b98a8" stroke-width="0.8"/>
<polygon points="1470.0,103.0 1471.5,109.6 1478.8,114.7 1481.0,124.3 1478.8,130.9 1475.9,141.2 1471.5,155.9 1470.7,167.6 1472.5,167.6 1476.0,150.0 1478.5,141.2 1482.5,130.0 1484.5,124.3 1486.5,112.0 1487.6,103.0" fill="none" stroke="#8b98a8" stroke-width="0.7"/>
<g fill="#a9ccee" stroke="#8db4dc" stroke-width="0.6"><path d="M1168 104H1209Q1206 111 1192 112Q1178 113 1168 110Z"/><path d="M1254 104H1289Q1286 112 1274 113Q1260 112 1254 104Z"/><path d="M1193 243l8 -4l18 9l6 -3l3 3l-5 3l16 9l-3 3l-14 -6l-2 5l-5 -1l1 -6l-12 -5l-3 4l-6 -3l3 -5z"/></g>
<g fill="none" stroke="#b5d2ee" stroke-width="1"><path d="M1170 142q8 -5 14 2q6 5 12 -6q6 -8 10 -14l4 -12q8 4 14 6q6 3 8 9q6 6 10 12q10 6 18 8q6 3 8 10q-4 8 -2 12q4 6 6 8"/><path d="M1172 196q10 4 14 14q4 12 16 18q4 6 2 14"/><path d="M1388 362q4 8 2 14M1432 376q4 10 -2 22"/></g>
<polygon points="1305.5,150.4 1408.8,150.4 1406.1,262.8 1422.6,262.8 1422.6,261.2 1423.8,263.1 1430.8,267.5 1437.7,272.7 1443.0,270.0 1439.0,262.0 1441.2,259.6 1446.5,265.7 1460.4,271.8 1444.7,288.4 1427.3,302.4 1409.8,312.8 1408.0,323.3 1411.6,339.0 1397.6,349.5 1387.1,351.2 1387.1,360.0 1366.2,375.7 1355.7,384.4 1355.7,389.6 1355.7,389.6 1351.8,388.1 1340.2,383.1 1330.3,379.8 1313.8,379.8 1297.2,379.3 1280.7,375.7 1264.2,367.4 1247.6,354.2 1235.5,343.5 1237.7,332.7 1238.6,322.8 1242.7,314.5 1239.4,306.3 1237.7,298.0 1242.7,286.4 1251.0,269.9 1257.6,260.0 1261.0,254.0 1337.0,252.7 1339.4,235.5 1332.0,228.3 1325.0,224.8 1320.3,211.6 1298.8,196.0 1289.0,186.6 1281.0,184.2 1304.8,183.7" fill="#f5b862"/>
<polygon points="1395.8,287.5 1404.6,283.2 1416.8,279.7 1420.3,282.3 1416.8,287.5 1406.3,291.0 1400.2,293.6 1397.5,291.0" fill="#a9ccee" stroke="#5d6670" stroke-width="0.8"/>
<path d="M1420 281l4 -8l6 -5" fill="none" stroke="#a9ccee" stroke-width="1.6"/>
<path d="M1261.1 254.1 L1279.7 255.1 L1298.8 257.0 L1300.7 260.6 L1302.2 260.0 L1297.2 269.9 L1290.6 278.2 L1287.3 284.8 L1290.6 295.5 L1289.0 307.9 L1291.4 316.2 L1292.3 322.8M1292.3 322.8 L1284.0 325.3 L1280.7 323.6 L1274.1 317.9 L1272.4 307.1 L1265.8 309.6 L1264.2 319.5 L1261.7 323.6 L1257.6 331.1 L1242.7 333.6M1238.6 337.7 L1257.6 344.3 L1264.2 334.4 L1266.7 336.9 L1274.1 337.7 L1279.0 334.4 L1284.0 325.3M1274.1 337.7 L1270.8 339.3 L1270.0 354.2 L1261.7 359.2M1292.3 322.8 L1298.9 327.8 L1302.2 321.2 L1322.0 320.3 L1325.3 322.8M1298.9 327.8 L1297.2 346.0 L1294.8 350.1 L1293.1 360.8 L1292.3 356.7 L1289.0 354.2 L1279.0 356.7 L1274.1 368.3M1297.2 346.0 L1303.8 350.1 L1310.5 346.8 L1315.4 350.9 L1322.0 347.6 L1328.6 357.5M1322.0 320.3 L1318.7 331.1 L1312.1 346.0M1318.7 331.1 L1326.2 339.3 L1328.6 357.5 L1323.7 372.4 L1324.5 379.3M1337.0 252.7 L1320.3 257.0 L1320.4 260.0 L1315.4 273.2 L1325.3 284.8 L1319.5 293.1 L1314.6 301.3 L1317.1 309.6 L1323.7 316.2 L1325.3 322.8M1325.3 322.8 L1338.6 322.0 L1365.0 306.3 L1371.4 307.6 L1383.6 305.8M1328.6 357.5 L1336.9 347.6 L1346.8 344.3 L1348.5 336.0 L1350.5 333.8 L1359.2 326.8 L1380.1 325.0 L1381.9 332.0 L1380.1 342.5 L1390.6 346.0M1346.8 344.3 L1358.4 349.3 L1350.1 359.2 L1357.6 365.8 L1351.8 375.7 L1345.2 379.0 L1348.5 386.0M1358.4 349.3 L1380.1 342.5M1337.0 252.7 L1340.0 253.5 L1353.7 254.6 L1362.7 257.0 L1371.4 262.2 L1389.7 254.4 L1391.5 265.7 L1387.1 283.2 L1385.4 291.9 L1383.6 305.8 L1397.6 300.6 L1406.3 299.7 L1408.9 307.6 L1409.5 312.0M1391.5 265.7 L1397.6 266.6 L1405.4 263.1M1371.4 307.6 L1373.2 316.3 L1367.9 319.8M1423.8 263.1 L1413.3 269.2 L1397.6 266.6" fill="none" stroke="#6a635b" stroke-width="1.4" stroke-linejoin="round"/>
<polyline points="1355.7,389.6 1355.7,384.4 1366.2,375.7 1387.1,360.0 1387.1,351.2 1397.6,349.5 1411.6,339.0 1408.0,323.3 1409.8,312.8 1427.3,302.4 1444.7,288.4 1460.4,271.8" fill="none" stroke="#d5d5e2" stroke-width="3" opacity="0.85"/>
<polyline points="1355.7,389.6 1355.7,384.4 1366.2,375.7 1387.1,360.0 1387.1,351.2 1397.6,349.5 1411.6,339.0 1408.0,323.3 1409.8,312.8 1427.3,302.4 1444.7,288.4 1460.4,271.8" fill="none" stroke="#8a8a9c" stroke-width="0.9" stroke-dasharray="5 2.5"/>
<polyline points="1235.0,342.0 1237.7,332.7 1238.6,322.8 1242.7,314.5 1239.4,306.3 1237.7,298.0 1242.7,286.4 1251.0,269.9 1257.6,260.0 1261.0,254.0 1337.0,252.7 1339.4,235.5 1332.0,228.3 1325.0,224.8 1320.3,211.6 1298.8,196.0 1289.0,186.6 1281.0,184.2 1304.8,183.7 1305.5,150.4 1408.8,150.4" fill="none" stroke="#d5d5e2" stroke-width="3" opacity="0.85"/>
<polyline points="1235.0,342.0 1237.7,332.7 1238.6,322.8 1242.7,314.5 1239.4,306.3 1237.7,298.0 1242.7,286.4 1251.0,269.9 1257.6,260.0 1261.0,254.0 1337.0,252.7 1339.4,235.5 1332.0,228.3 1325.0,224.8 1320.3,211.6 1298.8,196.0 1289.0,186.6 1281.0,184.2 1304.8,183.7 1305.5,150.4 1408.8,150.4" fill="none" stroke="#8a8a9c" stroke-width="0.9" stroke-dasharray="5 2.5"/>
<polyline points="1408.8,150.4 1409.5,142.0 1425.0,138.0 1434.0,128.0 1441.0,115.0 1447.0,104.0" fill="none" stroke="#d5d5e2" stroke-width="3" opacity="0.85"/>
<polyline points="1408.8,150.4 1409.5,142.0 1425.0,138.0 1434.0,128.0 1441.0,115.0 1447.0,104.0" fill="none" stroke="#8a8a9c" stroke-width="0.9" stroke-dasharray="5 2.5"/>
<polyline points="1397.6,349.5 1413.3,353.0 1422.0,361.7 1437.7,372.2 1462.2,375.7 1479.6,379.1 1491.8,387.9 1488.3,407.0" fill="none" stroke="#d5d5e2" stroke-width="3" opacity="0.85"/>
<polyline points="1397.6,349.5 1413.3,353.0 1422.0,361.7 1437.7,372.2 1462.2,375.7 1479.6,379.1 1491.8,387.9 1488.3,407.0" fill="none" stroke="#8a8a9c" stroke-width="0.9" stroke-dasharray="5 2.5"/>
<polyline points="1235.5,343.5 1247.6,354.2 1264.2,367.4 1280.7,375.7 1297.2,379.3 1313.8,379.8 1330.3,379.8 1340.2,383.1 1351.8,388.1 1355.7,389.6" fill="none" stroke="#6f6a66" stroke-width="1.1"/>
<polyline points="1409.1,150 1406.1,262.8 1422.6,262.8" fill="none" stroke="#a00018" stroke-width="1.7" stroke-dasharray="6 1.5 1.2 1.5 1.2 1.5"/>
<text x="1404" y="191.7" font-size="16.5" font-weight="bold" fill="#9698a8" stroke="#fff" stroke-opacity="0.75" stroke-width="2.6" paint-order="stroke" stroke-linejoin="round">B</text>
<text x="1241" y="305" font-size="17.5" font-weight="bold" fill="#8d95a3" stroke="#fff" stroke-opacity="0.75" stroke-width="2.6" paint-order="stroke" stroke-linejoin="round" textLength="132" lengthAdjust="spacing">Guatemala</text>
<text x="1499" y="330.6" font-size="16.5" font-weight="bold" fill="#8e8e90" stroke="#fff" stroke-opacity="0.75" stroke-width="2.6" paint-order="stroke" stroke-linejoin="round" letter-spacing="6">Ho</text>
<circle cx="1332.8" cy="336.9" r="3.6" fill="#a3a7b3" stroke="#fff" stroke-opacity="0.8" stroke-width="1.5"/>
<text x="1338.6" y="329.8" font-size="13" fill="#6a6e76" stroke="#fff" stroke-opacity="0.75" stroke-width="2.6" paint-order="stroke" stroke-linejoin="round" textLength="72" lengthAdjust="spacingAndGlyphs">Guatemala</text>
<circle cx="1408.6" cy="392.6" r="3.2" fill="#a9a9ad" stroke="#fff" stroke-opacity="0.7" stroke-width="1.2"/>
<text x="1413.3" y="385.8" font-size="13" fill="#66686c" stroke="#fff" stroke-opacity="0.75" stroke-width="2.6" paint-order="stroke" stroke-linejoin="round" textLength="86.4" lengthAdjust="spacingAndGlyphs">San Salvador</text>
<circle cx="1522.4" cy="367.3" r="3" fill="#a9a9ad" stroke="#fff" stroke-opacity="0.7" stroke-width="1.2"/>
<text x="1172.4" y="372.4" font-size="11.5" font-style="italic" fill="#1f2a3c" letter-spacing="1">721</text>
<text x="1511.5" y="174.4" class="serif" font-size="13.3" font-weight="bold" font-style="italic" fill="#1469af" letter-spacing="2.6">Gulf</text>
<text x="1520.5" y="195.5" class="serif" font-size="13.3" font-weight="bold" font-style="italic" fill="#1469af" letter-spacing="2.6">of</text>
<text x="1489.6" y="215.4" class="serif" font-size="13.3" font-weight="bold" font-style="italic" fill="#1469af" letter-spacing="2.6">Honduras</text>
<rect x="1419" y="169.1" width="89.3" height="40" fill="#fff"/>
<text x="1463.8" y="180.2" font-size="11.6" fill="#111" text-anchor="middle" textLength="56.5" lengthAdjust="spacingAndGlyphs">Diferendo</text>
<text x="1463.8" y="193.7" font-size="11.6" fill="#111" text-anchor="middle" textLength="69.8" lengthAdjust="spacingAndGlyphs">territorial no</text>
<text x="1463.8" y="207.1" font-size="11.6" fill="#111" text-anchor="middle" textLength="45.6" lengthAdjust="spacingAndGlyphs">resuelto</text>
</g>
<rect x="1170.2" y="104.6" width="355.89999999999986" height="329.79999999999995" fill="none" stroke="#000" stroke-width="2"/>
<line x1="1334.4" y1="380.7" x2="1133.5" y2="436.6" stroke="#e8121d" stroke-width="1.6"/>
<rect x="1330.4" y="376.7" width="8" height="8" rx="1.5" fill="#f00b12"/>
<path d="M0 0H1536V1089H0Z M2 1.7H1534.2V1086.8H2Z" fill="#140e0e" fill-rule="evenodd"/>
<rect x="18" y="21.9" width="1508.8" height="71.6" fill="#fff" stroke="#000" stroke-width="2"/>
<text y="50.6" font-size="27.5" fill="#3ba612"><tspan x="387" textLength="63.7" lengthAdjust="spacingAndGlyphs">Area</tspan> <tspan x="461.1" textLength="32.6" lengthAdjust="spacingAndGlyphs">de</tspan> <tspan x="505.4" textLength="50.8" lengthAdjust="spacingAndGlyphs">Uso</tspan> <tspan x="568.4" textLength="114.1" lengthAdjust="spacingAndGlyphs">Multiple</tspan> <tspan x="694.2" textLength="67.7" lengthAdjust="spacingAndGlyphs">Zona</tspan> <tspan x="772" textLength="35" lengthAdjust="spacingAndGlyphs">de</tspan> <tspan x="817" textLength="110" lengthAdjust="spacingAndGlyphs">Reserva</tspan> <tspan x="938" textLength="219" lengthAdjust="spacingAndGlyphs">(MONTERRICO)</tspan></text>
<text x="1523.2" y="85.3" font-size="12.8" fill="#111" text-anchor="end" textLength="142.7" lengthAdjust="spacingAndGlyphs">DAGeos-204-2026-BS</text>
<rect x="26" y="28.1" width="59" height="45.6" rx="3.5" fill="#1fa37b"/>
<rect x="32.6" y="32.9" width="46.4" height="36.7" rx="2.5" fill="#fff"/>
<text x="55.3" y="86.6" class="serif" font-size="16.5" font-weight="bold" fill="#1fa37b" stroke="#1fa37b" stroke-width="1.2" text-anchor="middle" textLength="58.5" lengthAdjust="spacingAndGlyphs">CONAP</text>
<g transform="translate(30 30) scale(0.03858)">

<path fill="#000" d="M85 335 L205 338 L262 268 L288 284 L258 345 L290 480 L315 512 Q400 505 470 472 Q540 462 610 462 L600 430 Q640 400 625 340 Q585 260 600 215 Q640 150 720 150 Q800 160 835 200 L862 168 L882 235 L868 300 Q900 380 960 440 Q1040 520 1062 610 Q1075 700 1065 800 Q1100 860 1100 930 Q1095 950 1060 948 L905 948 L880 895 L860 948 L715 948 Q700 930 715 895 L655 890 L650 948 L165 950 Q145 915 170 885 L350 878 L345 700 Q325 640 335 600 L270 585 Q240 540 232 470 L212 350 L85 347 Z"/>
<circle cx="712" cy="248" r="60" fill="#fff"/><circle cx="712" cy="246" r="17" fill="#000"/>
<path fill="none" stroke="#fff" stroke-width="38" stroke-linecap="round" d="M338 596 Q430 552 505 588 Q540 640 555 720 Q580 810 650 845 Q720 865 765 800 Q785 700 815 640 Q870 595 950 625 Q1020 680 1042 800"/>
<path fill="none" stroke="#fff" stroke-width="32" stroke-linecap="round" d="M778 465 L870 545 L1000 648"/>
<path fill="none" stroke="#fff" stroke-width="22" stroke-linecap="round" d="M842 300 Q850 360 815 430"/>
<path fill="#000" d="M508 288 Q606 312 600 375 Q590 428 512 420 Q494 398 520 386 Q552 376 549 350 Q544 328 500 316 Z"/>
<path fill="none" stroke="#000" stroke-width="40" stroke-linecap="round" d="M1085 900 Q1122 700 1095 520 Q1060 400 1005 290 Q985 200 1050 155 Q1130 120 1195 185 Q1235 260 1180 315 Q1120 345 1090 290 Q1085 240 1140 232"/>

</g>
<rect x="1169" y="534.5" width="357.5" height="104.5" fill="#e2e2e2" stroke="#000" stroke-width="1.4"/>
<text x="1185" y="559.8" font-size="20" fill="#111" textLength="117.5" lengthAdjust="spacingAndGlyphs">Simbología</text>
<rect x="1185.5" y="577" width="44" height="20.5" fill="#e2e2e2" stroke="#a0a0a0" stroke-width="1.2"/>
<text y="594.6" font-size="20" fill="#111"><tspan x="1240" textLength="65" lengthAdjust="spacingAndGlyphs">Límite</tspan> <tspan x="1312.9" textLength="158.8" lengthAdjust="spacingAndGlyphs">Departamental</tspan></text>
<rect x="1186.5" y="612.5" width="42" height="18.5" fill="#e2e2e2" stroke="#4fdf12" stroke-width="3.2"/>
<text y="629" font-size="20" fill="#111"><tspan x="1240" textLength="47" lengthAdjust="spacingAndGlyphs">Área</tspan> <tspan x="1294.5" textLength="100.5" lengthAdjust="spacingAndGlyphs">protegida</tspan></text>
<rect x="1181.5" y="926.5" width="342.5" height="151.5" fill="#fff" stroke="#000" stroke-width="1.4"/>
<text x="1375.5" y="947" font-size="11.4" font-weight="bold" font-style="italic" fill="#111" text-anchor="middle" textLength="203" lengthAdjust="spacingAndGlyphs">Sistema de coordenadas proyectadas</text>
<text x="1375.5" y="962.9" font-size="11.4" font-weight="bold" font-style="italic" fill="#111" text-anchor="middle" textLength="88" lengthAdjust="spacingAndGlyphs">Proyección GTM</text>
<text x="1375.5" y="978.8" font-size="11.4" font-weight="bold" font-style="italic" fill="#111" text-anchor="middle" textLength="79" lengthAdjust="spacingAndGlyphs">Datum WGS84</text>
<text x="1187.7" y="991.8" font-size="11.4" font-weight="bold" font-style="italic" fill="#111" textLength="41" lengthAdjust="spacingAndGlyphs">Fuente:</text>
<text y="1007.7" font-size="11.4" font-weight="bold" font-style="italic" fill="#111"><tspan x="1187.7">Base </tspan><tspan x="1221.6">de </tspan><tspan x="1242.5">datos </tspan><tspan x="1281.2">de </tspan><tspan x="1302">la </tspan><tspan x="1319.6">Dirección </tspan><tspan x="1378.2">Análisis </tspan><tspan x="1427.2">Geoespacial </tspan></text>
<text x="1187.7" y="1023.9" font-size="11.4" font-weight="bold" font-style="italic" fill="#111" textLength="67" lengthAdjust="spacingAndGlyphs">CONAP 2026</text>
<text x="1187.7" y="1039.6" font-size="11.4" font-weight="bold" font-style="italic" fill="#111" textLength="227" lengthAdjust="spacingAndGlyphs">Base de datos cartografía básica IGN 2010</text>
</svg></body></html>
